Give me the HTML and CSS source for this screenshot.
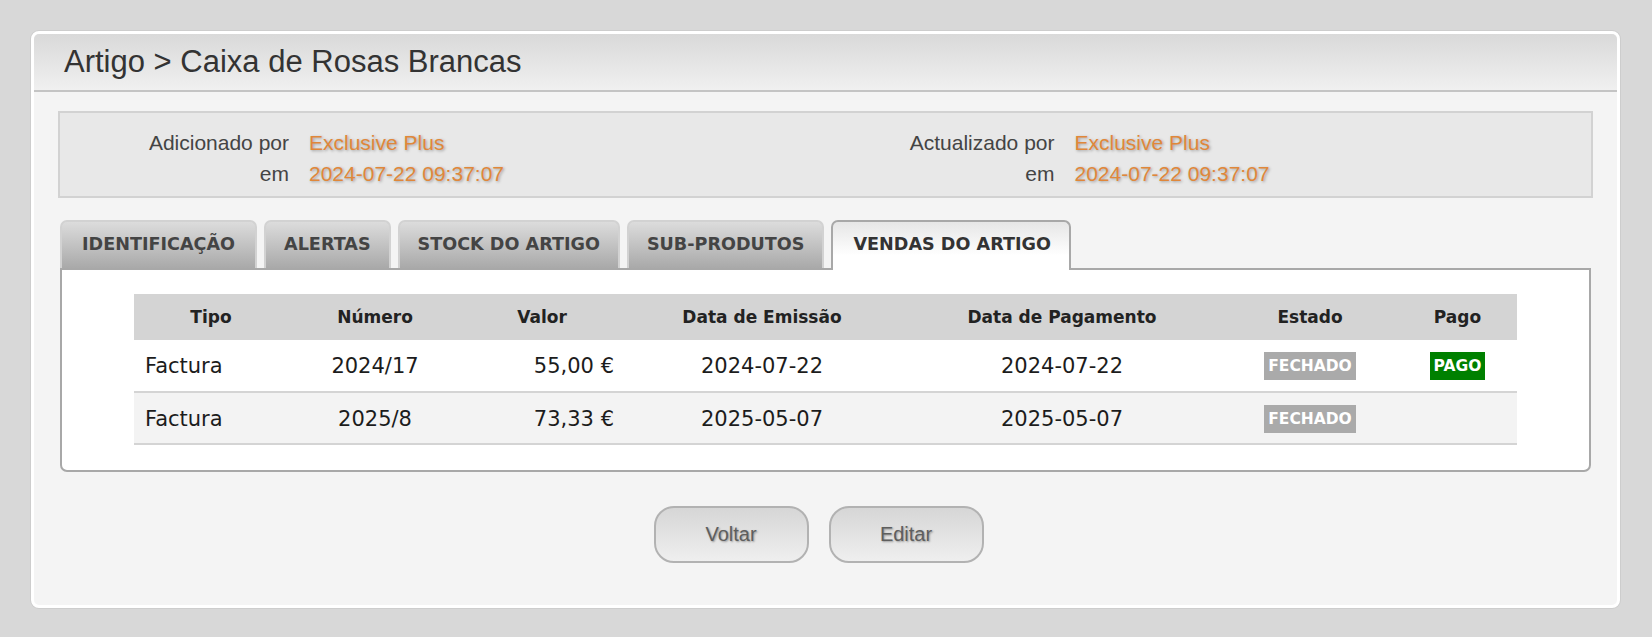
FILE: index.html
```html
<!DOCTYPE html>
<html lang="pt">
<head>
    <meta charset="UTF-8">
    <title>Artigo - Caixa de Rosas Brancas</title>
    <link rel="stylesheet" href="styles.css">
</head>
<body>
<div id="page">
    <div class="panel">
        <div class="panel-head">Artigo &gt; Caixa de Rosas Brancas</div>
        <div class="panel-body">
            <div class="meta">
                <div class="meta-col">
                    <span class="lbl">Adicionado por</span><span class="val">Exclusive Plus</span>
                    <span class="lbl">em</span><span class="val">2024-07-22 09:37:07</span>
                </div>
                <div class="meta-col">
                    <span class="lbl">Actualizado por</span><span class="val">Exclusive Plus</span>
                    <span class="lbl">em</span><span class="val">2024-07-22 09:37:07</span>
                </div>
            </div>

            <ul class="tabs">
                <li>IDENTIFICAÇÃO</li>
                <li>ALERTAS</li>
                <li>STOCK DO ARTIGO</li>
                <li>SUB-PRODUTOS</li>
                <li class="on">VENDAS DO ARTIGO</li>
            </ul>
            <div class="tab-box">
                <table class="sales">
                    <colgroup>
                        <col style="width:154px"><col style="width:174px"><col style="width:160px">
                        <col style="width:280px"><col style="width:320px"><col style="width:176px"><col>
                    </colgroup>
                    <tr>
                        <th>Tipo</th><th>Número</th><th>Valor</th><th>Data de Emissão</th>
                        <th>Data de Pagamento</th><th>Estado</th><th>Pago</th>
                    </tr>
                    <tr>
                        <td class="l">Factura</td><td>2024/17</td><td class="r">55,00 €</td><td>2024-07-22</td>
                        <td>2024-07-22</td><td><span class="tag grey">FECHADO</span></td><td><span class="tag green">PAGO</span></td>
                    </tr>
                    <tr class="alt">
                        <td class="l">Factura</td><td>2025/8</td><td class="r">73,33 €</td><td>2025-05-07</td>
                        <td>2025-05-07</td><td><span class="tag grey">FECHADO</span></td><td></td>
                    </tr>
                </table>
            </div>

            <div class="buttons">
                <a class="btn" href="">Voltar</a>
                <a class="btn" href="">Editar</a>
            </div>
        </div>
    </div>
</div>
</body>
</html>
```

FILE: styles.css
```css
*{
    margin: 0;
    padding: 0;
    box-sizing: border-box;
    list-style: none;
}
html,body{
    background: #d8d8d8;
}
#page{
    padding: 31px 32px 31px 31px;
}
.panel{
    background: #f4f4f4;
    border: 3px solid #fff;
    border-radius: 8px;
    box-shadow: 0 0 0 1px #cdcdcd;
    overflow: hidden;
}
.panel-head{
    height: 58px;
    line-height: 56px;
    padding-left: 30px;
    font-family: "Liberation Sans", Arial, sans-serif;
    font-size: 31px;
    color: #333;
    background: linear-gradient(#d9d9d9, #f0f0f0);
    border-bottom: 2px solid #c4c4c4;
}
.panel-body{
    padding: 19px 24px 42px 24px;
}

/* info */
.meta{
    display: flex;
    background: #e8e8e8;
    border: 2px solid #d2d2d2;
    padding: 14px 0 7px 0;
    font-family: "Liberation Sans", Arial, sans-serif;
    font-size: 21px;
    line-height: 31px;
}
.meta-col{
    flex: 1;
    display: grid;
    grid-template-columns: 229px 1fr;
    column-gap: 20px;
}
.meta .lbl{
    text-align: right;
    color: #444;
}
.meta .val{
    color: #e0873a;
    text-shadow: 1px 1px 3px rgba(0,0,0,.35);
}

/* tabs */
.tabs{
    display: flex;
    gap: 7px;
    margin: 22px 2px 0 2px;
    font-family: "DejaVu Sans", Verdana, sans-serif;
    font-weight: bold;
    font-size: 17.6px;
}
.tabs li{
    height: 48px;
    line-height: 44px;
    padding: 0 18px;
    color: #444;
    background: linear-gradient(#dcdcdc, #a9a9a9);
    border: 2px solid #d2d2d2;
    border-bottom: none;
    border-radius: 7px 7px 0 0;
    white-space: nowrap;
}
.tabs li:first-child{
    padding: 0 20px;
}
.tabs li.on{
    position: relative;
    z-index: 1;
    height: 50px;
    margin-bottom: -2px;
    padding: 0 18px 0 20px;
    color: #333;
    background: linear-gradient(#e6e6e6, #fff 70%);
    border-color: #a8a8a8;
}
.tab-box{
    margin: 0 2px;
    background: #fff;
    border: 2px solid #a8a8a8;
    border-radius: 0 0 7px 7px;
    padding: 24px 0 25px 0;
}

/* table */
.sales{
    width: 1383px;
    margin: 0 auto;
    border-collapse: collapse;
    font-family: "DejaVu Sans", Verdana, sans-serif;
    color: #1c1c1c;
}
.sales th{
    height: 46px;
    background: #d4d4d4;
    font-size: 17px;
    color: #222;
    text-align: center;
}
.sales td{
    height: 52px;
    font-size: 21px;
    text-align: center;
    border-bottom: 2px solid #d4d4d4;
    padding-top: 1px;
}
.sales td.l{
    text-align: left;
    padding-left: 11px;
}
.sales td.r{
    text-align: right;
    padding-right: 8px;
}
.sales tr.alt td{
    background: #f3f3f3;
}
.tag{
    display: inline-block;
    vertical-align: middle;
    height: 28px;
    line-height: 28px;
    padding: 0 4px;
    font-size: 15.5px;
    font-weight: bold;
    color: #fff;
}
.tag.grey{
    background: #aaa;
}
.tag.green{
    background: #008000;
}

/* buttons */
.buttons{
    display: flex;
    justify-content: center;
    gap: 20px;
    margin-top: 34px;
    padding-right: 14px;
}
.btn{
    width: 155px;
    height: 57px;
    line-height: 53px;
    text-align: center;
    border: 2px solid #b2b2b2;
    border-radius: 20px;
    background: linear-gradient(#d6d6d6, #efefef);
    font-family: "Liberation Sans", Arial, sans-serif;
    font-size: 20px;
    color: #5e5e5e;
    text-shadow: 1px 1px 2px rgba(0,0,0,.35);
    text-decoration: none;
}
```
